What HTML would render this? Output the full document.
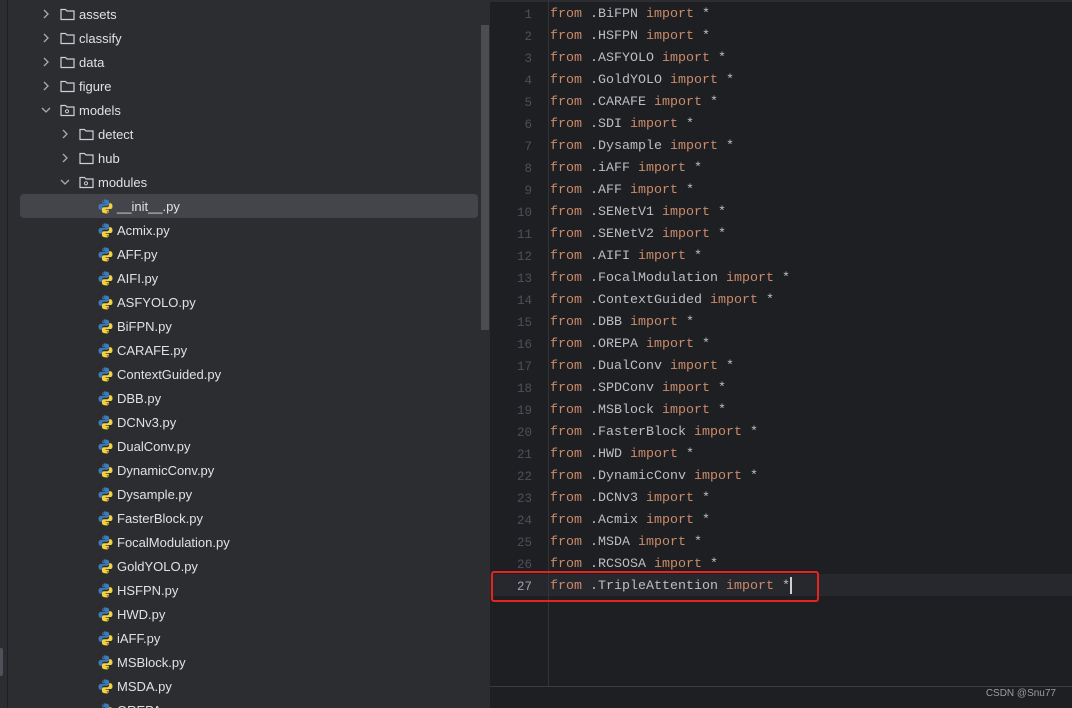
<!DOCTYPE html>
<html><head><meta charset="utf-8"><style>
*{margin:0;padding:0;box-sizing:border-box}
html,body{width:1072px;height:708px;overflow:hidden}
body{background:#1e1f22;position:relative;font-family:"Liberation Sans",sans-serif}
#left{position:absolute;left:0;top:0;width:490px;height:708px;background:#2b2d30}
#strip{position:absolute;left:7px;top:0;width:1px;height:708px;background:#1e1f22}
#tab{position:absolute;left:0;top:648px;width:3px;height:28px;background:#4e5157;border-radius:0 2px 2px 0}
#sb{position:absolute;left:481px;top:25px;width:8px;height:305px;background:#4b4d51}
#sel{position:absolute;left:20px;top:194px;width:458px;height:24px;background:#43454a;border-radius:4px}
#tree{position:absolute;left:0;top:0;width:480px;height:708px;overflow:hidden}
.row{position:absolute;height:24px;line-height:24px;font-size:13px;color:#dfe1e5;white-space:nowrap}
.row .ic{position:absolute;line-height:0}
.row .ic svg{display:block}
.row .tx{position:absolute;top:1px;line-height:24px}
#ed{position:absolute;left:490px;top:0;width:582px;height:708px;background:#1e1f22}
#gut{position:absolute;left:548px;top:0;width:1px;height:686px;background:#313438}
#bot{position:absolute;left:490px;top:686px;width:582px;height:1px;background:#393b40}
#topl{position:absolute;left:490px;top:0;width:582px;height:2px;background:#2b2d30}
.ln{position:absolute;left:490px;width:42px;text-align:right;font-family:"Liberation Mono",monospace;font-size:12.5px;color:#4b5059;height:22px;line-height:22px}
.cl{position:absolute;left:550px;font-family:"Liberation Mono",monospace;font-size:13.33px;color:#bcbec4;height:22px;line-height:22px;white-space:pre}
.k{color:#c98b6a}
#cur{position:absolute;left:490px;top:574px;width:582px;height:22px;background:#26282e}
#box{position:absolute;left:491px;top:571px;width:328px;height:31px;border:2px solid #e8221f;border-radius:3px}
#wm{position:absolute;right:16px;top:688px;font-size:10px;color:#9a9da3}
</style></head><body>
<div id="left"></div><div id="strip"></div><div id="tab"></div><div id="sb"></div><div id="sel"></div>
<div id="tree"></div>
<div id="ed"></div><div id="cur"></div><div id="topl"></div><div id="gut"></div><div id="bot"></div>
<div id="code"></div>
<div id="box"></div>
<div id="wm">CSDN @Snu77</div>
<script>
var chevR='<svg width="12" height="14" viewBox="0 0 12 14"><path d="M4 3l4 4-4 4" fill="none" stroke="#a8abb0" stroke-width="1.3"/></svg>';
var chevD='<svg width="12" height="14" viewBox="0 0 12 14"><path d="M2 5l4 4 4-4" fill="none" stroke="#a8abb0" stroke-width="1.3"/></svg>';
var fold='<svg width="15" height="14" viewBox="0 0 15 14"><path d="M1 2.5h4.5l1.5 1.5h7v8.5H1z" fill="none" stroke="#ced0d6" stroke-width="1.2"/></svg>';
var pkg='<svg width="15" height="14" viewBox="0 0 15 14"><path d="M1 2.5h4.5l1.5 1.5h7v8.5H1z" fill="none" stroke="#ced0d6" stroke-width="1.2"/><circle cx="7" cy="8.3" r="1.6" fill="none" stroke="#ced0d6" stroke-width="1"/></svg>';
var py='<svg width="15" height="15" viewBox="0 0 15 15"><path d="M7.3 0.5c-3 0-3 1.3-3 2.3v1.6h3.2v.6H2.6C1.3 5 .5 6 .5 7.8s.8 3 2.1 3h1.3V8.9c0-1.2 1-2.2 2.2-2.2h3.2c1 0 1.8-.8 1.8-1.8V2.8c0-1-.9-2.3-3.8-2.3z" fill="#3d7ab8"/><circle cx="5.6" cy="2.1" r=".6" fill="#2b2d30"/><path d="M7.7 14.5c3 0 3-1.3 3-2.3v-1.6H7.5V10h4.9c1.3 0 2.1-1 2.1-2.8s-.8-3-2.1-3h-1.3v1.9c0 1.2-1 2.2-2.2 2.2H5.7c-1 0-1.8.8-1.8 1.8v1.9c0 1 .9 2.3 3.8 2.3z" fill="#f5d03f"/><circle cx="9.4" cy="12.9" r=".6" fill="#2b2d30"/></svg>';
var rows=[[0,'r','f','assets'],[0,'r','f','classify'],[0,'r','f','data'],[0,'r','f','figure'],[0,'d','p','models'],[1,'r','f','detect'],[1,'r','f','hub'],[1,'d','p','modules']];
var files=['__init__.py','Acmix.py','AFF.py','AIFI.py','ASFYOLO.py','BiFPN.py','CARAFE.py','ContextGuided.py','DBB.py','DCNv3.py','DualConv.py','DynamicConv.py','Dysample.py','FasterBlock.py','FocalModulation.py','GoldYOLO.py','HSFPN.py','HWD.py','iAFF.py','MSBlock.py','MSDA.py','OREPA.py'];
var h='';
rows.forEach(function(r,i){var y=2+i*24,o=r[0]*19;
h+='<div class="row" style="left:0;top:'+y+'px;width:480px">'+
'<span class="ic" style="left:'+(40+o)+'px;top:5px">'+(r[1]=='r'?chevR:chevD)+'</span>'+
'<span class="ic" style="left:'+(60+o)+'px;top:5px">'+(r[2]=='f'?fold:pkg)+'</span>'+
'<span class="tx" style="left:'+(79+o)+'px">'+r[3]+'</span></div>';});
files.forEach(function(f,i){var y=194+i*24;
h+='<div class="row" style="left:0;top:'+y+'px;width:480px"><span class="ic" style="left:98px;top:5px">'+py+'</span><span class="tx" style="left:117px">'+f+'</span></div>';});
document.getElementById('tree').innerHTML=h;
var mods=['BiFPN','HSFPN','ASFYOLO','GoldYOLO','CARAFE','SDI','Dysample','iAFF','AFF','SENetV1','SENetV2','AIFI','FocalModulation','ContextGuided','DBB','OREPA','DualConv','SPDConv','MSBlock','FasterBlock','HWD','DynamicConv','DCNv3','Acmix','MSDA','RCSOSA','TripleAttention'];
var c='';
mods.forEach(function(m,i){var y=4+i*22;
c+='<div class="ln" style="top:'+y+'px'+(i==26?';color:#a1a3ab':'')+'">'+(i+1)+'</div>';
c+='<div class="cl" style="top:'+y+'px"><span class="k">from</span> .'+m+' <span class="k">import</span> *'+(i==26?'<span style="display:inline-block;width:2px;height:17px;background:#ced0d6;vertical-align:middle"></span>':'')+'</div>';});
document.getElementById('code').innerHTML=c;
</script>
</body></html>
